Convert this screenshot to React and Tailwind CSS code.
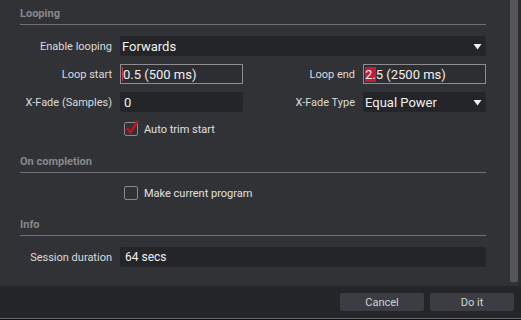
import React from 'react'

const font = { fontFamily: 'Roboto, "Noto Sans", sans-serif' }

function Caret() {
  return (
    <svg width="9" height="7" viewBox="0 0 9 7" className="shrink-0">
      <polygon points="0.5,1 8.5,1 4.5,6.5" fill="#f2f2f2" />
    </svg>
  )
}

function Section({ title, className = '' }) {
  return (
    <div className={`h-[25px] border-b border-[#707074] flex items-center pt-[2px] ${className}`}>
      <span className="text-[11px] font-bold text-[#88888c] leading-none">{title}</span>
    </div>
  )
}

function Label({ children, w = 'w-[100px]' }) {
  return <div className={`${w} shrink-0 pr-[8px] text-right text-[11px] text-[#dcdcdc] leading-none whitespace-nowrap`}>{children}</div>
}

function Checkbox({ checked }) {
  return (
    <div className="relative w-[14px] h-[14px] rounded-[2px] border border-[#8a8a8e] shrink-0">
      {checked && (
        <svg width="16" height="16" viewBox="0 0 16 16" className="absolute left-[-1px] top-[-4px]">
          <path d="M3.5 10 L6.5 13.5 L13.5 2.5" stroke="#c3101f" strokeWidth="2.6" fill="none" strokeLinecap="round" strokeLinejoin="round" />
        </svg>
      )}
    </div>
  )
}

export default function App() {
  return (
    <div className="w-[521px] h-[320px] bg-[#313236] flex flex-col overflow-hidden" style={font}>
      <div className="h-[286px] flex">
        <div className="w-[510px] pl-[20px] pr-[24px]">
          <Section title="Looping" />

          <div className="flex items-center mt-[11px] h-[20px]">
            <Label>Enable looping</Label>
            <div className="flex-1 h-[20px] bg-[#242529] rounded-[2px] flex items-center justify-between pl-[2px] pr-[4px]">
              <span className="text-[13px] text-[#f0f0f0] leading-none">Forwards</span>
              <Caret />
            </div>
          </div>

          <div className="flex items-center mt-[8px] h-[20px]">
            <Label>Loop start</Label>
            <div className="w-[123px] h-[20px] border border-[#8e8e90] bg-[#2d2e32] flex items-center pl-[1px]">
              <span className="w-[1px] h-[14px] bg-[#e0344e]" />
              <span className="text-[13px] text-[#f0f0f0] leading-none">0.5 (500 ms)</span>
            </div>
            <Label w="w-[120px]">Loop end</Label>
            <div className="w-[123px] h-[20px] border border-[#8e8e90] bg-[#2d2e32] flex items-center pl-[1px]">
              <span className="text-[13px] text-[#f0f0f0] leading-none bg-[#c8193c] py-[1px]">2.</span>
              <span className="text-[13px] text-[#f0f0f0] leading-none">5 (2500 ms)</span>
            </div>
          </div>

          <div className="flex items-center mt-[8px] h-[20px]">
            <Label>X-Fade (Samples)</Label>
            <div className="w-[123px] h-[20px] bg-[#242529] rounded-[2px] flex items-center pl-[4px]">
              <span className="text-[13px] text-[#f0f0f0] leading-none">0</span>
            </div>
            <Label w="w-[120px]">X-Fade Type</Label>
            <div className="w-[123px] h-[20px] bg-[#242529] rounded-[2px] flex items-center justify-between pl-[2px] pr-[4px]">
              <span className="text-[13px] text-[#f0f0f0] leading-none">Equal Power</span>
              <Caret />
            </div>
          </div>

          <div className="flex items-center mt-[10px] h-[14px] pl-[104px] gap-[6px]">
            <Checkbox checked />
            <span className="text-[11px] text-[#e0e0e0] leading-none">Auto trim start</span>
          </div>

          <Section title="On completion" className="mt-[12px]" />

          <div className="flex items-center mt-[13px] h-[14px] pl-[104px] gap-[6px]">
            <Checkbox />
            <span className="text-[11px] text-[#e0e0e0] leading-none">Make current program</span>
          </div>

          <Section title="Info" className="mt-[11px]" />

          <div className="flex items-center mt-[11px] h-[20px]">
            <Label>Session duration</Label>
            <div className="flex-1 h-[20px] bg-[#242529] rounded-[2px] flex items-center pl-[5px]">
              <span className="text-[12px] text-[#f0f0f0] leading-none">64 secs</span>
            </div>
          </div>
        </div>
        <div className="w-[8px] h-[282px] bg-[#56555a] rounded-b-[2px]" />
        <div className="w-[3px] bg-[#2b2c30]" />
      </div>

      <div className="h-[32px] bg-[#242529] flex items-center justify-end gap-[6px] pr-[7px]">
        <button className="w-[84px] h-[18px] bg-[#3c3d42] rounded-[2px] text-[11px] text-[#d2d2d2] leading-none">Cancel</button>
        <button className="w-[84px] h-[18px] bg-[#3c3d42] rounded-[2px] text-[11px] text-[#d2d2d2] leading-none">Do it</button>
      </div>
      <div className="h-[1px] bg-[#6b6b6d]" />
      <div className="h-[1px] bg-[#0e0e10]" />
    </div>
  )
}
